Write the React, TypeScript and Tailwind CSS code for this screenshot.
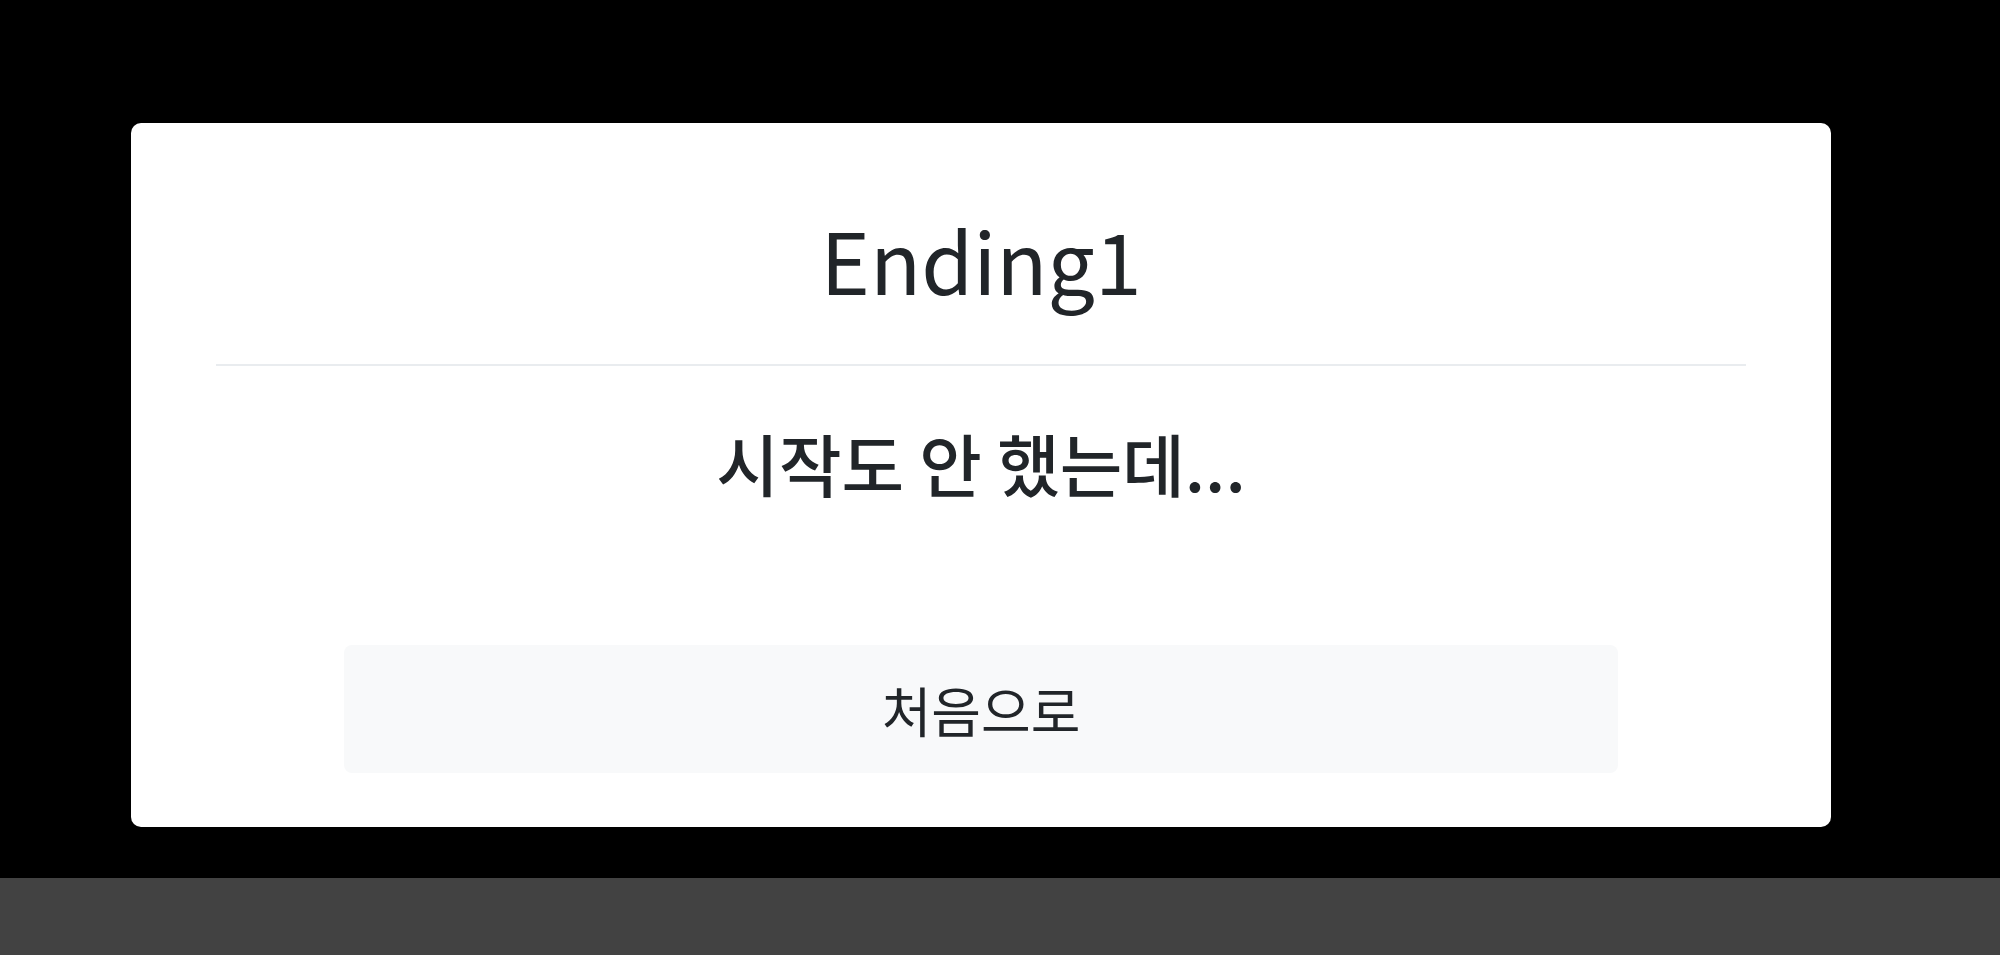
export default function App() {
  return (
    <div
      className="h-screen flex flex-col bg-black"
      style={{ fontFamily: '"Noto Sans CJK KR", "Noto Sans", sans-serif' }}
    >
      <div className="flex-1 pl-[131px] pt-[123px]">
        <div className="w-[1700px] h-[704px] bg-white rounded-[10px] px-[85px] pt-[94px] flex flex-col">
          <h1 className="text-center text-[84px] leading-none font-normal text-[#212529]">
            Ending1
          </h1>
          <hr className="mt-[63px] border-t-2 border-[#e9ecef]" />
          <p className="mt-[63px] text-center text-[68px] leading-none font-medium text-[#212529]">
            시작도 안 했는데...
          </p>
          <button className="mt-[148px] mx-[128px] h-[128px] rounded-[8px] bg-[#f8f9fa] text-[54px] text-[#212529]">
            처음으로
          </button>
        </div>
      </div>
      <div className="h-[77px] bg-[#424242]" />
    </div>
  );
}
